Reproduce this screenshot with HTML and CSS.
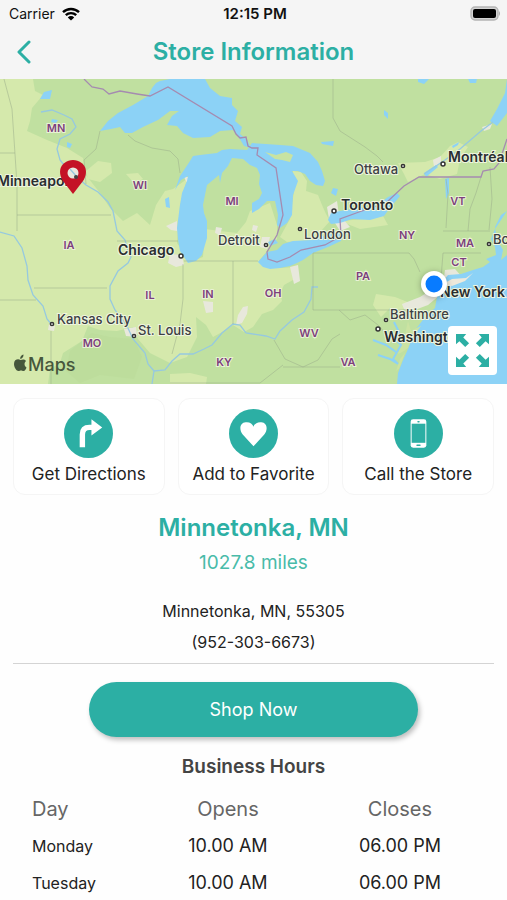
FILE: index.html
```html
<!DOCTYPE html>
<html lang="en">
<head>
  <meta charset="UTF-8" />
  <meta name="viewport" content="width=device-width, initial-scale=1.0"/>
  <title>Store Information</title>
  <link rel="stylesheet" href="styles.css">
</head>
<body>

  <header>
    <div class="status-bar">
      <div class="carrier">
        <span>Carrier</span>
        <svg width="18" height="14" viewBox="0 0 18 14" aria-hidden="true">
          <path d="M1 5.2A11.5 11.5 0 0 1 17 5.2M3.8 8.2A7.5 7.5 0 0 1 14.2 8.2" fill="none" stroke="#000" stroke-width="2.4"/>
          <path d="M5.8 10.4A4.6 4.6 0 0 1 12.2 10.4L9 13.6Z"/>
        </svg>
      </div>
      <span class="time">12:15 PM</span>
      <svg class="battery" width="31" height="15" viewBox="0 0 31 15" aria-hidden="true">
        <rect x="1" y="1" width="27" height="13" rx="4" fill="#d4d4d4" stroke="#b4b4b4" stroke-width="1.4"/>
        <rect x="3" y="3" width="23" height="9" rx="2"/>
        <path d="M29 5Q31 7.5 29 10Z" fill="#aaa"/>
      </svg>
    </div>
    <nav>
      <button class="back-btn" aria-label="Back">
        <svg width="16" height="24" viewBox="0 0 16 24" aria-hidden="true">
          <path d="M13 2L3 12L13 22" fill="none" stroke="#2cafa4" stroke-width="3" stroke-linecap="round" stroke-linejoin="round"/>
        </svg>
      </button>
      <h1>Store Information</h1>
    </nav>
  </header>

  <main>
    <section class="map">
      <svg class="map-canvas" viewBox="0 0 507 305" role="img" aria-label="Map from the store to your location">
        <rect width="507" height="305" fill="#c0e0a0"/>

        <!-- farmland -->
        <g fill="#d5e9ac">
          <path d="M0 0H33L35 12L43 16L32 29L30 42L27 52L47 61L67 69L83 79L85 95L100 114L110 129L123 142L137 134L150 146L156 126L165 112L173 110L187 100L180 126L177 164L190 183L203 178L205 150L220 152L237 154L246 143L250 132L270 124L277 146L277 160L258 183L280 189L297 188L293 201L284 206L280 214L282 222L273 231L262 235L253 248L244 253L233 246L224 252L213 258L206 246L196 238L197 258L187 278L170 284L150 274L138 260L133 248L117 252L100 251L88 247L82 262L63 274L60 284L50 290L48 305H0Z"/>
          <path d="M293 92L301 93L307 102L306 112L318 116L322 126L326 135L330 142L313 161L287 163L280 158L290 140L294 112Z"/>
          <path d="M86 92L98 82L111 84L112 94L100 103L88 100Z"/>
          <path d="M126 95L138 94L143 100L134 104Z"/>
          <path d="M398 84L425 83L440 78L450 67L458 63L468 68L460 80L457 95L440 100L425 95L408 103L404 95Z"/>
          <path d="M376 215L395 218L410 224L398 235L390 229L381 238L373 226Z"/>
          <path d="M340 142L365 140L383 137L388 146L360 150Z"/>
          <path d="M170 295L190 294L207 298L206 305H170Z"/>
        </g>
        <path d="M92 254L110 258L134 260L142 278L134 300L100 296L80 304L66 292L70 272Z" fill="#bddd9c"/>

        <!-- cities -->
        <g fill="#e8e8dc">
          <path d="M67 91L78 90L82 98L76 105L67 101ZM170 175L182 176L184 186L176 188L168 184ZM203 222L213 223L213 233L206 234ZM243 228L248 227L247 235L242 244L236 246L238 236ZM290 188L298 186L300 202L294 205ZM402 225L420 218L436 208L440 216L428 226L412 232L404 230ZM445 191L455 190L462 198L452 201L444 198ZM49 245L55 247L54 252L48 251ZM124 250L136 248L137 258L126 257ZM262 158L270 158L267 170L260 168ZM327 128L337 122L339 136L329 140Z"/>
          <path d="M433 81L441 77L441 84L434 88ZM482 48L492 45L490 50L484 52ZM166 147L177 142L177 152L171 151ZM184 98L190 98L187 104ZM216 148L222 149L220 156L215 154ZM253 146L258 147L256 153L252 151ZM335 144L343 140L350 148L340 152Z"/>
        </g>

        <!-- lakes and ocean -->
        <g fill="#8cd2f6">
          <path d="M100 52L108 42L118 34L133 26L148 17L152 9L156 4L160 2L170 0H205L210 9L220 17L232 19L232 26L238 32L235 42L242 48L240 55L247 61L251 69L244 67L238 57L233 51L220 52L210 58L193 59L183 54L177 47L167 46L172 37L179 32L170 32L158 41L143 48L132 54L125 54L120 48L111 50Z"/>
          <path d="M175 111L180 97L190 82L193 77L200 76L217 74L222 71L230 70L247 71L252 64L266 65L280 66L293 67L310 74L318 83L322 92L325 102L323 107L316 106L310 102L305 95L298 92L292 92L298 102L293 116L292 136L287 144L280 149L277 146L278 136L275 122L267 122L259 130L252 134L252 124L259 120L262 114L259 105L260 96L257 89L250 86L243 80L232 79L228 87L222 94L220 104L219 96L213 101L207 106L205 116L203 126L204 134L207 142L207 159L202 176L196 182L188 184L180 172L178 160L177 149L180 126L182 114L187 102L188 97L181 101Z"/>
          <path d="M258 183L267 173L277 171L283 165L293 162L313 161L330 154L344 153L341 162L328 168L313 174L303 181L297 184L290 187L280 189L270 190L263 188Z"/>
          <path d="M328 141L331 134L340 132L360 129L374 128L380 124L388 118L397 114L400 117L390 129L384 137L370 141L352 140L340 144L331 145Z"/>
          <path d="M507 132L501 136L495 148L497 161L503 171L501 181L507 176V305H397L398 294L403 281L408 270L410 264L416 250L425 238L435 229L437 218L443 202L448 196L461 195L473 191L483 188L490 183L486 180L496 176L495 168L491 160L495 150Z"/>
          <path d="M268 163L275 160L278 164L270 167ZM44 13L52 11L50 20L40 20ZM52 40L58 41L56 44L51 43ZM67 63L72 65L70 69L67 68ZM384 31L388 34L388 40L384 36ZM418 0H429L424 5L418 3ZM468 0H477L476 4L470 4ZM321 63L334 62L333 67L322 65ZM165 120L169 118L170 129L166 128ZM333 109L338 110L336 117L331 114Z"/>
          <path d="M445 100L449 99L449 114L446 120ZM452 67L459 63L458 66L453 69ZM424 94L436 86L438 88L426 98ZM507 0L505 14L497 30L490 42L497 47L507 34Z"/>
        </g>
        <path d="M265 73L276 76L286 73L293 76L290 83L282 81L275 80Z" fill="#c8e3a2"/>
        <path d="M443 205L452 200L466 199L473 194L465 202L452 207Z" fill="#eee9db"/>
        <path d="M408 242L405 256L400 264L398 275L404 272L408 269L413 258L421 247L411 252ZM396 292L400 280L405 274L399 290Z" fill="#cbe3a2"/>
        <path d="M394 243L399 253L395 260L401 266L393 280L398 285M373 261L386 266L396 273M378 276L390 280L398 285" fill="none" stroke="#8cd2f6" stroke-width="2"/>

        <!-- rivers -->
        <g fill="none" stroke="#96c9df" stroke-width="1.3">
          <path d="M41 33L52 31L64 36L72 40L76 48L70 55L60 60L57 70L60 81L67 90L76 97L86 106L98 113L108 123L113 132L117 152L125 161L128 171L131 178L128 184L118 192L110 207L110 220L115 231L127 247L133 260L145 274L148 285L154 292L152 305"/>
          <path d="M0 153L14 157L22 169L27 187L28 201L33 216L43 227L47 240L52 246"/>
          <path d="M154 292L165 291L172 282L180 275L193 275L204 270L212 266L222 254L233 245L240 246L246 254L266 257L275 260L280 252L292 241L304 233L311 220L312 208L318 208"/>
          <path d="M424 95L445 81L460 70L481 52L493 43"/>
        </g>

        <!-- state lines -->
        <g fill="none" stroke="#9aab8a" stroke-width="1" opacity=".5">
          <path d="M4 0L12 30L15 75L17 106V152M0 74H15M17 136H111M34 209H107M0 221H36M51 252V305M100 52L96 70L84 81L86 105M128 56L135 62L152 69L170 72L178 80L180 94M117 162H178M183 185V220L180 245L172 275M184 182H258M233 182V245M313 174V231H340L415 231M333 0V39L340 52L365 68L377 77L383 83M313 174H409L414 180L420 193M339 231L350 241L365 236L378 246L388 257M274 261L285 280L303 288L318 281L332 260L340 255M170 304H260L283 286M283 288H340M446 100L448 115L446 149M481 98L476 114L470 130L468 152M490 88L492 120L489 151M443 152H490M443 174H481M443 174L441 200"/>
        </g>

        <!-- country border -->
        <path d="M84 0L92 8L103 10L109 15L120 12L137 15L150 17L168 8L232 47L236 55L240 59L246 58L248 67L252 69L258 69L257 76L276 89L283 136L277 156L267 173L268 180L277 183L290 178L301 171L325 166L341 157L340 140L359 133L386 124L404 107L419 98H481L483 92L494 90L499 84L507 60" fill="none" stroke="#a58bb0" stroke-width="1.3"/>

        <!-- labels -->
        <g class="state-labels">
          <text x="56" y="53">MN</text>
          <text x="140" y="110">WI</text>
          <text x="232" y="126">MI</text>
          <text x="69" y="170">IA</text>
          <text x="150" y="220">IL</text>
          <text x="208" y="219">IN</text>
          <text x="273" y="218">OH</text>
          <text x="92" y="268">MO</text>
          <text x="224" y="287">KY</text>
          <text x="309" y="258">WV</text>
          <text x="348" y="287">VA</text>
          <text x="363" y="201">PA</text>
          <text x="407" y="160">NY</text>
          <text x="458" y="126">VT</text>
          <text x="465" y="168">MA</text>
          <text x="459" y="187">CT</text>
        </g>
        <g fill="#fff" stroke="#333" stroke-width="1.5">
          <circle cx="76" cy="98" r="2"/>
          <circle cx="181" cy="177" r="2"/>
          <circle cx="334" cy="132" r="2"/>
          <circle cx="443" cy="85" r="2"/>
          <circle cx="378" cy="250" r="2"/>
          <circle cx="403" cy="87" r="1.6"/>
          <circle cx="300" cy="150" r="1.6"/>
          <circle cx="266" cy="166" r="1.6"/>
          <circle cx="52" cy="245" r="1.6"/>
          <circle cx="134" cy="257" r="1.6"/>
          <circle cx="386" cy="241" r="1.6"/>
          <circle cx="489" cy="165" r="1.6"/>
        </g>
        <g class="city-labels">
          <text x="354" y="95">Ottawa</text>
          <text x="304" y="160">London</text>
          <text x="218" y="166">Detroit</text>
          <text x="57" y="245">Kansas City</text>
          <text x="138" y="256">St. Louis</text>
          <text x="390" y="240">Baltimore</text>
          <text x="493" y="165">Boston</text>
        </g>
        <g class="city-labels major">
          <text x="-3" y="107">Minneapolis</text>
          <text x="118" y="176">Chicago</text>
          <text x="341" y="131">Toronto</text>
          <text x="448" y="83">Montréal</text>
          <text x="440" y="218">New York</text>
          <text x="384" y="263">Washington</text>
        </g>

        <!-- store pin -->
        <path d="M73 115L63 102C57 93 60 82 73 81C86 82 89 93 83 102Z" fill="#c41226"/>
        <circle cx="73" cy="94" r="5.5" fill="#e9e9df"/>
        <path d="M70 90L77 98" stroke="#96c9df" stroke-width="1.3"/>
        <circle cx="76" cy="98" r="2" fill="#444"/>

        <!-- user location -->
        <circle class="user-dot" cx="434" cy="205" r="13" fill="#fff"/>
        <circle cx="434" cy="205" r="8.5" fill="#087bff"/>

        <g fill="#46573c">
          <path d="M20.500 281C18 279.500 14 280.500 14 285C14 288.500 16.500 292 18.500 292C19.500 292 20 291.400 21 291.400C22 291.400 22.500 292 23.500 292C25 292 26 290 26.500 288.500C24 287 24 283.500 26 282C24.500 280 22.500 280.500 20.500 281ZM20.200 280C20 277.500 21.500 276 23.500 275.500C23.700 278 22.200 279.800 20.200 280Z"/>
          <text class="map-brand" x="28" y="292">Maps</text>
        </g>
      </svg>
      <button class="expand-btn" aria-label="Full screen map">
        <svg viewBox="0 0 34 34" aria-hidden="true">
          <g fill="#2cafa4">
            <path id="arrow" d="M0 0H10.500L7.500 3.500L13.500 9.500L9.500 13.500L3.500 7.500L0 10.500Z"/>
            <use href="#arrow" transform="translate(34 0) rotate(90)"/>
            <use href="#arrow" transform="translate(34 34) rotate(180)"/>
            <use href="#arrow" transform="translate(0 34) rotate(270)"/>
          </g>
        </svg>
      </button>
    </section>

    <section class="actions">
      <button class="action-card">
        <svg viewBox="0 0 50 50" aria-hidden="true">
          <circle cx="25" cy="25" r="25" fill="#2cafa4"/>
          <path d="M16 39V26Q16 16 26 16H28V10.500L39 19L28 27V21.500H26Q21.500 21.500 21.500 26V39Z" fill="#fff"/>
        </svg>
        <span>Get Directions</span>
      </button>
      <button class="action-card">
        <svg viewBox="0 0 50 50" aria-hidden="true">
          <circle cx="25" cy="25" r="25" fill="#2cafa4"/>
          <path d="M25 38L14 26C10 21 11 14 17 13.500C21 13 24 15 25 18C26 15 29 13 33 13.500C39 14 40 21 36 26Z" fill="#fff"/>
        </svg>
        <span>Add to Favorite</span>
      </button>
      <button class="action-card">
        <svg viewBox="0 0 50 50" aria-hidden="true">
          <circle cx="25" cy="25" r="25" fill="#2cafa4"/>
          <rect x="17" y="10.500" width="16" height="29" rx="2.500" fill="#fff"/>
          <rect x="18" y="15" width="14" height="19.500" fill="#2cafa4"/>
          <path d="M23.500 37H26.500M24.500 13H25.500" stroke="#2cafa4" stroke-width="1.500" stroke-linecap="round"/>
        </svg>
        <span>Call the Store</span>
      </button>
    </section>

    <section class="store">
      <h2>Minnetonka, MN</h2>
      <p class="distance">1027.8 miles</p>
      <p class="address">Minnetonka, MN, 55305</p>
      <p class="phone">(952-303-6673)</p>
    </section>

    <button class="shop-btn">Shop Now</button>

    <section class="hours">
      <h3>Business Hours</h3>
      <table>
        <thead>
          <tr><th>Day</th><th>Opens</th><th>Closes</th></tr>
        </thead>
        <tbody>
          <tr><td>Monday</td><td>10.00 AM</td><td>06.00 PM</td></tr>
          <tr><td>Tuesday</td><td>10.00 AM</td><td>06.00 PM</td></tr>
        </tbody>
      </table>
    </section>
  </main>

</body>
</html>
```
FILE: styles.css
```css
* {
  box-sizing: border-box;
}
body {
  font-family: Inter, sans-serif;
  margin: 0;
  background: #fefefe;
  color: #222;
}
h1, h2, h3, p {
  margin: 0;
}
button {
  font-family: inherit;
  color: inherit;
  border: none;
  padding: 0;
  cursor: pointer;
}
svg {
  display: block;
}
header {
  background: #f5f5f5;
}
.status-bar {
  display: grid;
  grid-template-columns: 1fr auto 1fr;
  align-items: center;
  height: 27px;
  padding: 0 6px 0 9px;
  font-size: 14px;
  color: #111;
}
.carrier {
  display: flex;
  align-items: center;
  gap: 7px;
}
.time {
  font-size: 15px;
  font-weight: 600;
}
.battery {
  justify-self: end;
}
nav {
  display: grid;
  grid-template-columns: 48px 1fr 48px;
  align-items: center;
  height: 52px;
  padding-bottom: 2px;
}
.back-btn {
  background: none;
  display: flex;
  justify-content: center;
}
h1 {
  font-size: 24px;
  line-height: 28px;
  font-weight: 600;
  text-align: center;
  color: #2cafa4;
}

.map {
  position: relative;
}
.map-canvas {
  width: 100%;
  height: auto;
}
.state-labels {
  font-size: 11px;
  font-weight: 600;
  fill: #7c3f7c;
  text-anchor: middle;
  stroke: #e9f2d5;
  stroke-width: 2px;
  paint-order: stroke;
}
.city-labels {
  font-size: 13px;
  font-weight: 500;
  fill: #3c4043;
  stroke: #eef5df;
  stroke-width: 2px;
  paint-order: stroke;
}
.major {
  font-size: 14px;
  font-weight: 600;
  fill: #292d30;
}
.map-brand {
  font-size: 18px;
  font-weight: 500;
}
.user-dot {
  filter: drop-shadow(0 1px 3px rgba(0,0,0,0.3));
}
.expand-btn {
  position: absolute;
  right: 10px;
  bottom: 9px;
  width: 49px;
  height: 49px;
  padding: 8px;
  background: #fff;
  border-radius: 4px;
}

.actions {
  display: grid;
  grid-template-columns: repeat(3, 1fr);
  gap: 13px;
  padding: 14px 13px 0;
}
.action-card {
  display: flex;
  flex-direction: column;
  align-items: center;
  gap: 6px;
  padding: 10px 0;
  background: #fff;
  border: 1px solid #f5f5f5;
  border-radius: 12px;
  font-size: 17px;
  line-height: 20px;
}
.action-card svg {
  width: 49px;
  height: 49px;
}

.store {
  margin: 0 13px;
  padding: 18px 0 7px;
  text-align: center;
  border-bottom: 1px solid #d4d4d4;
}
h2 {
  font-size: 24px;
  line-height: 30px;
  font-weight: 600;
  color: #2cafa4;
}
.distance {
  margin: 8px 0 23px;
  font-size: 19px;
  line-height: 24px;
  color: #49bba9;
}
.address {
  font-size: 16px;
  line-height: 26px;
}
.phone {
  margin-top: 4px;
  font-size: 16px;
  line-height: 28px;
}
.shop-btn {
  display: block;
  width: 65%;
  height: 55px;
  margin: 18px auto 0;
  background: #2cafa4;
  color: #fff;
  border-radius: 28px;
  font-size: 18px;
  box-shadow: 2px 3px 5px rgba(0,0,0,0.25);
}

.hours {
  padding: 17px 21px;
}
h3 {
  font-size: 19px;
  line-height: 26px;
  font-weight: 600;
  text-align: center;
  color: #444;
}
table {
  width: 100%;
  margin-top: 10px;
  border-collapse: collapse;
  table-layout: fixed;
}
th, td {
  height: 37px;
  padding: 0;
  text-align: center;
  font-size: 18px;
}
th {
  font-weight: 400;
  font-size: 20px;
  color: #666;
}
th:first-child, td:first-child {
  width: 26%;
  padding-left: 11px;
  text-align: left;
}
td:first-child {
  font-size: 16px;
}
```
